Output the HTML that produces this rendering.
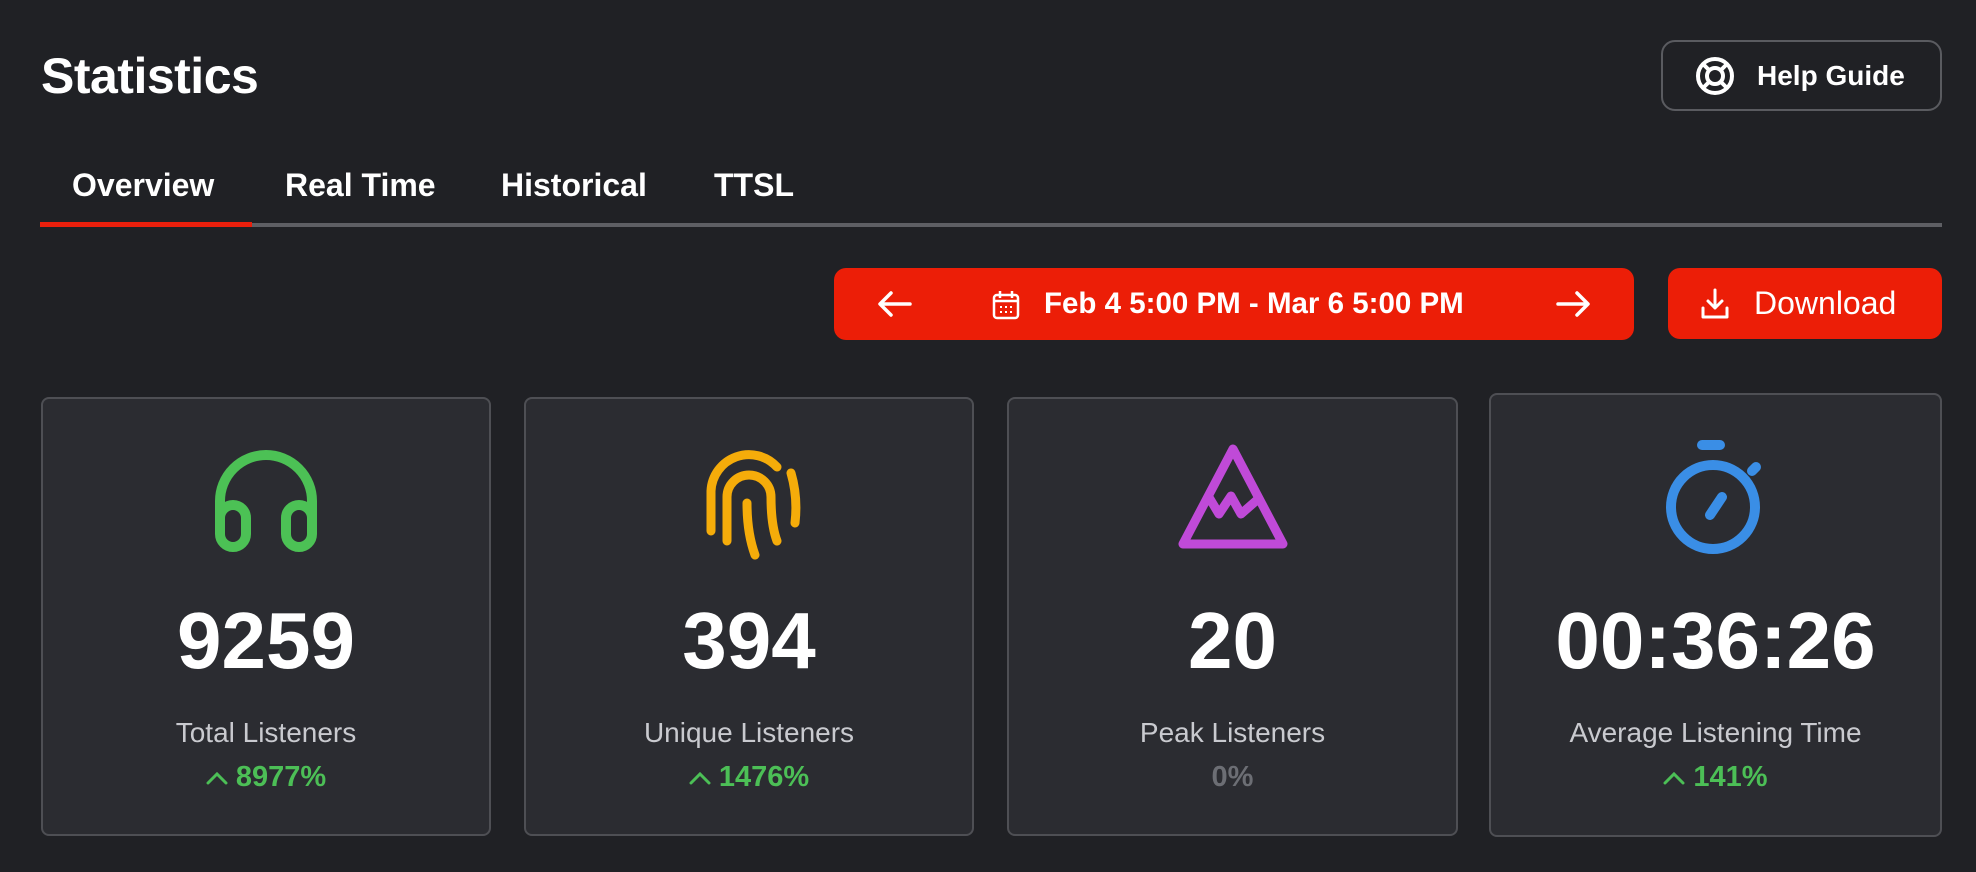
<!DOCTYPE html>
<html><head><style>
*{margin:0;padding:0;box-sizing:border-box}
body{width:1976px;height:872px;background:#202125;font-family:"Liberation Sans",sans-serif;color:#fff;position:relative;overflow:hidden}
.abs{position:absolute}
h1{position:absolute;left:41px;top:47px;font-size:50px;font-weight:bold;letter-spacing:-0.5px}
.help{left:1661px;top:40px;width:281px;height:71px;border:2px solid #5a5b60;border-radius:14px;display:flex;align-items:center;padding-left:32px;font-size:28px;font-weight:bold}
.help svg{margin-right:22px}
.tab{top:167px;font-size:32px;font-weight:bold}
.line{left:40px;top:223px;width:1902px;height:4px;background:#5e5f64}
.red{left:40px;top:222px;width:212px;height:5px;background:#ea1f0c}
.date{left:834px;top:268px;width:800px;height:72px;background:#ec1e07;border-radius:12px}
.dl{left:1668px;top:268px;width:274px;height:71px;background:#ec1e07;border-radius:12px;display:flex;align-items:center;padding-left:32px;font-size:32px}
.card{background:#2b2c31;border:2px solid #4e4f54;border-radius:8px;display:flex;flex-direction:column;align-items:center}
.card svg.ic{margin-top:40px}
.num{font-size:80px;font-weight:bold;margin-top:42px;line-height:1}
.lbl{font-size:28px;color:#c9cacf;margin-top:36px}
.pct{font-size:29px;font-weight:bold;color:#4cbf56;margin-top:12px;display:flex;align-items:center}
.pct svg{margin-right:8px}
</style></head><body>
<h1>Statistics</h1>
<div class="abs help"><svg width="40" height="40" viewBox="0 0 40 40" fill="none" stroke="#fff" stroke-width="4"><circle cx="20" cy="20" r="17"/><circle cx="20" cy="20" r="8"/><path d="M8 8l6 6M32 8l-6 6M8 32l6-6M32 32l-6-6"/></svg>Help Guide</div>
<div class="abs tab" style="left:72px">Overview</div>
<div class="abs tab" style="left:285px">Real Time</div>
<div class="abs tab" style="left:501px">Historical</div>
<div class="abs tab" style="left:714px">TTSL</div>
<div class="abs line"></div><div class="abs red"></div>
<div class="abs date">
<svg class="abs" style="left:44px;top:22px" width="34" height="28" viewBox="0 0 34 28" fill="none" stroke="#fff" stroke-width="3.5" stroke-linecap="round" stroke-linejoin="round"><path d="M32 14H3M13 3L2 14l11 11"/></svg>
<svg class="abs" style="left:158px;top:22px" width="28" height="30" viewBox="0 0 28 30" fill="none" stroke="#fff" stroke-width="2.5"><rect x="2" y="5" width="24" height="23" rx="3"/><path d="M2 11h24M8 1v7M20 1v7"/><path d="M8 17h2M13 17h2M18 17h2M8 22h2M13 22h2M18 22h2" stroke-width="2"/></svg>
<div class="abs" style="left:210px;top:19px;font-size:29.5px;font-weight:bold">Feb 4 5:00 PM - Mar 6 5:00 PM</div>
<svg class="abs" style="left:722px;top:22px" width="34" height="28" viewBox="0 0 34 28" fill="none" stroke="#fff" stroke-width="3.5" stroke-linecap="round" stroke-linejoin="round"><path d="M2 14h29M21 3l11 11-11 11"/></svg>
</div>
<div class="abs dl"><svg width="30" height="32" viewBox="0 0 30 32" fill="none" stroke="#fff" stroke-width="3" stroke-linecap="round" stroke-linejoin="round" style="margin-right:24px"><path d="M15 2v18M8 13l7 7 7-7M3 20v9h24v-9"/></svg>Download</div>

<div class="abs card" style="left:41px;top:397px;width:450px;height:439px">
<svg class="ic" width="120" height="120" viewBox="0 0 120 120" fill="none" stroke="#4cc155" stroke-width="10" stroke-linecap="round"><path d="M14 90V62a46 46 0 0 1 92 0v28"/><rect x="14" y="66" width="26" height="42" rx="13"/><rect x="80" y="66" width="26" height="42" rx="13"/></svg>
<div class="num">9259</div><div class="lbl">Total Listeners</div><div class="pct"><svg width="22" height="14" viewBox="0 0 22 14" fill="none" stroke="#4cbf56" stroke-width="3" stroke-linecap="round"><path d="M2 12L11 3l9 9"/></svg>8977%</div></div>

<div class="abs card" style="left:524px;top:397px;width:450px;height:439px">
<svg class="ic" style="margin-bottom:-4px" width="120" height="124" viewBox="0 0 120 124" fill="none" stroke="#f5ac0a" stroke-width="9" stroke-linecap="round"><path d="M22 92V52a38 38 0 0 1 66-24"/><path d="M102 34q7 24 4 50"/><path d="M38 102V58a22 22 0 0 1 44 0q0 28 6 44"/><path d="M58 64q0 30 8 52"/></svg>
<div class="num">394</div><div class="lbl">Unique Listeners</div><div class="pct"><svg width="22" height="14" viewBox="0 0 22 14" fill="none" stroke="#4cbf56" stroke-width="3" stroke-linecap="round"><path d="M2 12L11 3l9 9"/></svg>1476%</div></div>

<div class="abs card" style="left:1007px;top:397px;width:451px;height:439px">
<svg class="ic" width="120" height="120" viewBox="0 0 120 120" fill="none" stroke="#c04ad8" stroke-width="9" stroke-linejoin="round"><path d="M60 10L10 105h100z"/><path d="M34 55l12 20 12-18 10 18 16-14"/></svg>
<div class="num">20</div><div class="lbl">Peak Listeners</div><div class="pct" style="color:#6c6e74">0%</div></div>

<div class="abs card" style="left:1489px;top:393px;width:453px;height:444px">
<svg class="ic" width="120" height="124" viewBox="0 0 120 124" fill="none" stroke="#3a8ee6" stroke-width="10" stroke-linecap="round"><path d="M46 10h18"/><circle cx="57" cy="72" r="42"/><path d="M54 80l12-18M96 36l4-4"/></svg>
<div class="num">00:36:26</div><div class="lbl">Average Listening Time</div><div class="pct"><svg width="22" height="14" viewBox="0 0 22 14" fill="none" stroke="#4cbf56" stroke-width="3" stroke-linecap="round"><path d="M2 12L11 3l9 9"/></svg>141%</div></div>
</body></html>
